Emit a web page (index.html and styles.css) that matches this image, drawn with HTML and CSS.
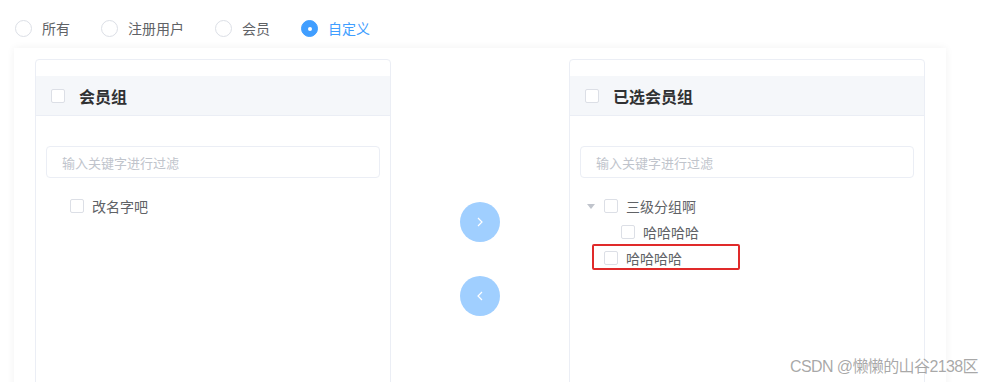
FILE: index.html
```html
<!DOCTYPE html>
<html lang="zh-CN">
<head>
    <meta charset="UTF-8">
    <title>会员组选择</title>
    <link rel="stylesheet" href="styles.css">
</head>
<body>
    <!-- 范围选择 -->
    <div class="radio-group">
        <label class="radio"><span class="radio-dot"></span><span class="radio-label">所有</span></label>
        <label class="radio"><span class="radio-dot"></span><span class="radio-label">注册用户</span></label>
        <label class="radio"><span class="radio-dot"></span><span class="radio-label">会员</span></label>
        <label class="radio checked"><span class="radio-dot"></span><span class="radio-label">自定义</span></label>
    </div>

    <!-- 穿梭框 -->
    <div class="transfer-box">
        <div class="panel">
            <div class="panel-header">
                <span class="checkbox"></span>
                <span class="panel-title">会员组</span>
            </div>
            <div class="panel-body">
                <div class="filter">输入关键字进行过滤</div>
                <div class="tree">
                    <div class="node">
                        <span class="caret hidden"></span>
                        <span class="checkbox"></span>
                        <span class="node-label">改名字吧</span>
                    </div>
                </div>
            </div>
        </div>

        <div class="buttons">
            <button class="circle-btn">
                <svg width="8" height="12" viewBox="0 0 8 12"><path d="M2 2l4 4-4 4" fill="none" stroke="#fff" stroke-width="1.2"/></svg>
            </button>
            <button class="circle-btn">
                <svg width="8" height="12" viewBox="0 0 8 12"><path d="M6 2L2 6l4 4" fill="none" stroke="#fff" stroke-width="1.2"/></svg>
            </button>
        </div>

        <div class="panel">
            <div class="panel-header">
                <span class="checkbox"></span>
                <span class="panel-title">已选会员组</span>
            </div>
            <div class="panel-body">
                <div class="filter">输入关键字进行过滤</div>
                <div class="tree">
                    <div class="node">
                        <span class="caret"></span>
                        <span class="checkbox"></span>
                        <span class="node-label">三级分组啊</span>
                    </div>
                    <div class="node child">
                        <span class="caret hidden"></span>
                        <span class="checkbox"></span>
                        <span class="node-label">哈哈哈哈</span>
                    </div>
                    <div class="node">
                        <span class="caret hidden"></span>
                        <span class="checkbox"></span>
                        <span class="node-label">哈哈哈哈</span>
                    </div>
                    <div class="highlight"></div>
                </div>
            </div>
        </div>
    </div>

    <div class="watermark">CSDN @懒懒的山谷2138区</div>
</body>
</html>
```

FILE: styles.css
```css
body {
    margin: 0;
    padding: 0;
    background: #fff;
    font-family: "Noto Sans CJK SC", "Noto Sans", sans-serif;
    font-size: 14px;
    color: #606266;
    overflow: hidden;
}

/* Radio row */
.radio-group {
    display: flex;
    align-items: center;
    padding: 20px 0 0 15px;
    height: 17px;
}

.radio {
    display: flex;
    align-items: center;
    margin-right: 31px;
    line-height: 17px;
}

.radio-dot {
    width: 17px;
    height: 17px;
    box-sizing: border-box;
    border: 1px solid #dcdfe6;
    border-radius: 50%;
    margin-right: 10px;
    position: relative;
}

.radio.checked .radio-dot {
    background: #409eff;
    border-color: #409eff;
}

.radio.checked .radio-dot::after {
    content: "";
    position: absolute;
    left: 6px;
    top: 6px;
    width: 4px;
    height: 4px;
    border-radius: 50%;
    background: #fff;
}

.radio.checked .radio-label {
    color: #409eff;
}

/* Transfer */
.transfer-box {
    display: flex;
    width: 890px;
    margin: 11px 0 0 14px;
    padding: 11px 21px 0;
    height: 400px;
    background: #fff;
    box-shadow: 0 0 8px rgba(0, 0, 0, 0.06);
}

.panel {
    width: 356px;
    height: 380px;
    box-sizing: border-box;
    border: 1px solid #ebeef5;
    border-radius: 4px;
    padding-top: 16px;
}

.panel-header {
    display: flex;
    align-items: center;
    height: 39px;
    padding-left: 15px;
    background: #f5f7fa;
    border-bottom: 1px solid #ebeef5;
}

.panel-title {
    margin-left: 14px;
    font-size: 16px;
    font-weight: bold;
    color: #303133;
}

.panel-body {
    padding: 30px 10px 0;
}

.filter {
    height: 32px;
    line-height: 31px;
    box-sizing: border-box;
    border: 1px solid #ebeef5;
    border-radius: 4px;
    padding-left: 15px;
    font-size: 13px;
    color: #c0c4cc;
}

.checkbox {
    display: inline-block;
    width: 14px;
    height: 14px;
    box-sizing: border-box;
    border: 1px solid #dcdfe6;
    border-radius: 2px;
    background: #fff;
    flex-shrink: 0;
}

/* Tree */
.tree {
    position: relative;
    padding-top: 15px;
}

.node {
    display: flex;
    align-items: center;
    height: 26px;
    padding-left: 7px;
    color: #606266;
}

.node.child {
    padding-left: 24px;
}

.caret {
    width: 0;
    height: 0;
    border-left: 4px solid transparent;
    border-right: 4px solid transparent;
    border-top: 5px solid #c0c4cc;
    margin-right: 9px;
}

.caret.hidden {
    border-top-color: transparent;
}

.node-label {
    margin-left: 8px;
}

.highlight {
    position: absolute;
    left: 12px;
    top: 66px;
    width: 144px;
    height: 22px;
    border: 2px solid #e02a2a;
    border-radius: 2px;
}

/* Middle buttons */
.buttons {
    flex: 1;
    display: flex;
    flex-direction: column;
    align-items: center;
    padding-top: 143px;
    gap: 34px;
}

.circle-btn {
    display: flex;
    align-items: center;
    justify-content: center;
    width: 40px;
    height: 40px;
    border: none;
    border-radius: 50%;
    background: #a0cfff;
    padding: 0;
}

/* Watermark */
.watermark {
    position: absolute;
    left: 790px;
    top: 353px;
    font-size: 16px;
    letter-spacing: -0.6px;
    color: rgba(110, 110, 110, 0.6);
    font-family: "Liberation Sans", "Noto Sans CJK SC", sans-serif;
    white-space: nowrap;
}
```
